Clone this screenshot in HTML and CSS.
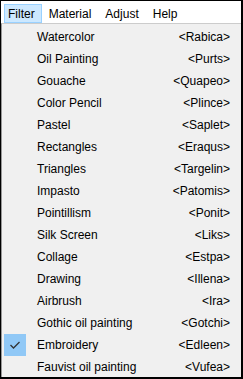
FILE: index.html
```html
<!DOCTYPE html>
<html>
<head>
<meta charset="utf-8">
<link rel="stylesheet" href="styles.css">
</head>
<body>
<div class="frame">
  <div class="menubar">
    <span class="top active">Filter</span>
    <span class="top">Material</span>
    <span class="top">Adjust</span>
    <span class="top">Help</span>
  </div>
  <div class="dropdown">
    <div class="item"><span class="chk"></span><span class="label">Watercolor</span><span class="key">&lt;Rabica&gt;</span></div>
    <div class="item"><span class="chk"></span><span class="label">Oil Painting</span><span class="key">&lt;Purts&gt;</span></div>
    <div class="item"><span class="chk"></span><span class="label">Gouache</span><span class="key">&lt;Quapeo&gt;</span></div>
    <div class="item"><span class="chk"></span><span class="label">Color Pencil</span><span class="key">&lt;Plince&gt;</span></div>
    <div class="item"><span class="chk"></span><span class="label">Pastel</span><span class="key">&lt;Saplet&gt;</span></div>
    <div class="item"><span class="chk"></span><span class="label">Rectangles</span><span class="key">&lt;Eraqus&gt;</span></div>
    <div class="item"><span class="chk"></span><span class="label">Triangles</span><span class="key">&lt;Targelin&gt;</span></div>
    <div class="item"><span class="chk"></span><span class="label">Impasto</span><span class="key">&lt;Patomis&gt;</span></div>
    <div class="item"><span class="chk"></span><span class="label">Pointillism</span><span class="key">&lt;Ponit&gt;</span></div>
    <div class="item"><span class="chk"></span><span class="label">Silk Screen</span><span class="key">&lt;Liks&gt;</span></div>
    <div class="item"><span class="chk"></span><span class="label">Collage</span><span class="key">&lt;Estpa&gt;</span></div>
    <div class="item"><span class="chk"></span><span class="label">Drawing</span><span class="key">&lt;Illena&gt;</span></div>
    <div class="item"><span class="chk"></span><span class="label">Airbrush</span><span class="key">&lt;Ira&gt;</span></div>
    <div class="item"><span class="chk"></span><span class="label">Gothic oil painting</span><span class="key">&lt;Gotchi&gt;</span></div>
    <div class="item"><span class="chk on"><svg width="12" height="10" viewBox="0 0 12 10"><path d="M1.5 5 L4.5 8 L10.5 2" fill="none" stroke="#333" stroke-width="1.3"/></svg></span><span class="label">Embroidery</span><span class="key">&lt;Edleen&gt;</span></div>
    <div class="item"><span class="chk"></span><span class="label">Fauvist oil painting</span><span class="key">&lt;Vufea&gt;</span></div>
  </div>
</div>
</body>
</html>
```

FILE: styles.css
```css
html, body {
  margin: 0;
  padding: 0;
  background: #000;
}
.frame {
  width: 240px;
  height: 376px;
  margin: 1px 2px 2px 1px;
  background: #fff;
  overflow: hidden;
  font-family: "Liberation Sans", Arial, sans-serif;
  font-size: 12px;
  color: #000;
}
.menubar {
  height: 22px;
  display: flex;
  align-items: flex-end;
  padding-left: 3px;
}
.top {
  height: 17px;
  line-height: 18px;
  padding: 0 6px 0 3px;
  margin-right: 3px;
  border: 1px solid transparent;
}
.top.active {
  background: #cce8ff;
  border-color: #99d1ff;
}
.dropdown {
  height: 376px;
  background: #f0f0f0;
  border-top: 1px solid #ccc;
  border-left: 1px solid #979797;
  padding-top: 2px;
  box-sizing: border-box;
}
.item {
  height: 22px;
  display: flex;
  align-items: center;
  padding-left: 2px;
  padding-right: 11px;
}
.chk {
  width: 22px;
  height: 22px;
  margin-right: 11px;
  display: flex;
  align-items: center;
  justify-content: center;
}
.chk.on {
  background: #90c8f6;
}
.label {
  flex: 1;
}
.key {
  text-align: right;
}
```
